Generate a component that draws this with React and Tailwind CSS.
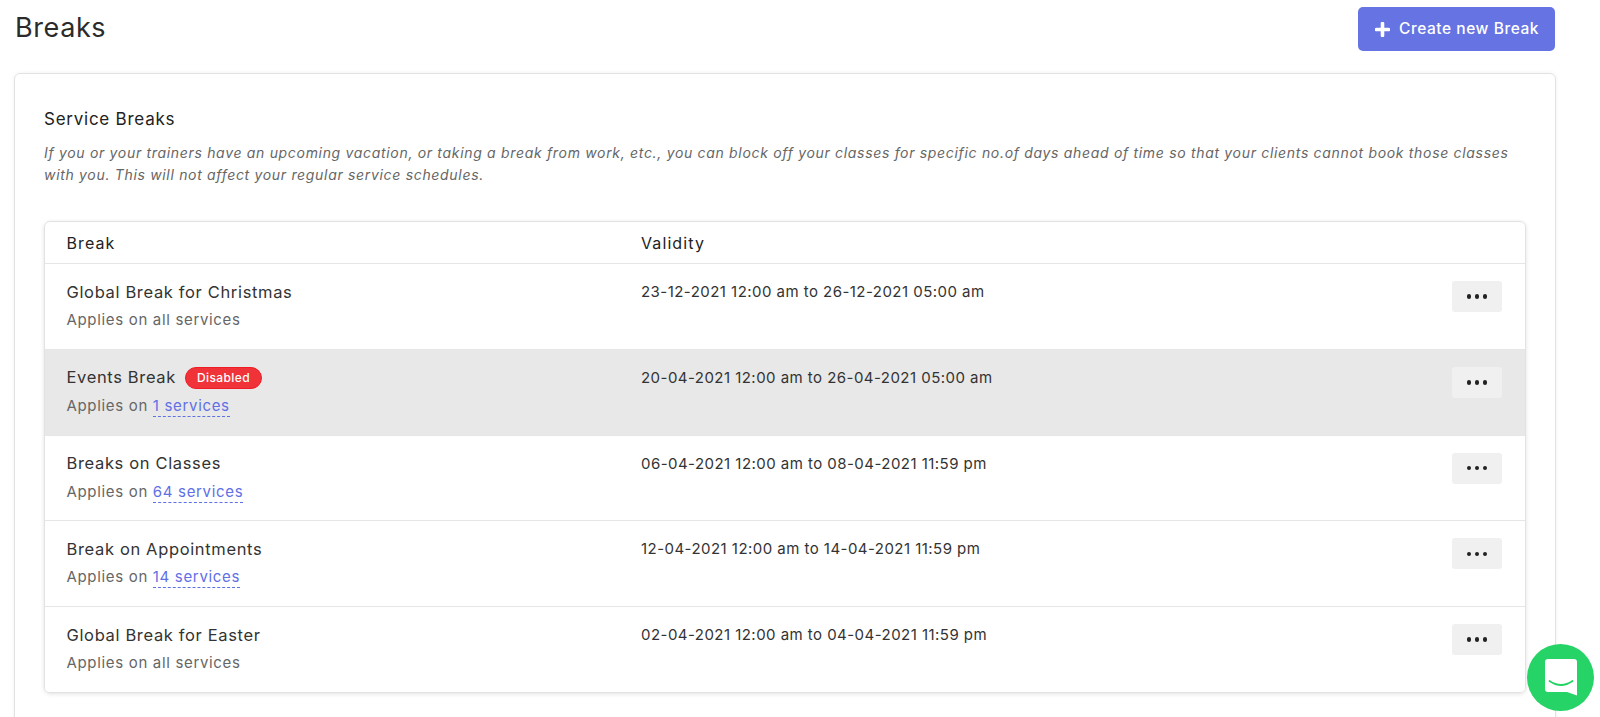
import React from "react";

const breaks = [
    { id: 1, name: "Global Break for Christmas", validity: "23-12-2021 12:00 am to 26-12-2021 05:00 am" },
    { id: 2, name: "Events Break", validity: "20-04-2021 12:00 am to 26-04-2021 05:00 am", count: 1, disabled: true },
    { id: 3, name: "Breaks on Classes", validity: "06-04-2021 12:00 am to 08-04-2021 11:59 pm", count: 64 },
    { id: 4, name: "Break on Appointments", validity: "12-04-2021 12:00 am to 14-04-2021 11:59 pm", count: 14 },
    { id: 5, name: "Global Break for Easter", validity: "02-04-2021 12:00 am to 04-04-2021 11:59 pm" },
];

const BreakRow = ({ item }) => (
    <div className={`flex h-[85.8px] border-t border-[#e6e6e6] ${item.disabled ? "bg-[#e8e8e8]" : "bg-white"}`}>
        <div className="w-[596px] pl-[21.5px] pt-[16px]">
            <div className="flex items-center h-[24px] text-[16.5px] tracking-[0.65px] text-[#333]">
                {item.name}
                {item.disabled && (
                    <span className="ml-[9px] h-[22px] w-[77px] flex items-center justify-center rounded-full border border-[#f01c24] bg-[#ef3338] text-white text-[12px] tracking-[0.4px] font-medium">
                        Disabled
                    </span>
                )}
            </div>
            <div className="mt-[5px] text-[15px] tracking-[0.67px] text-[#666]">
                Applies on{" "}
                {item.count ? (
                    <span className="text-[#5f6fe6] border-b border-dashed border-[#5f6fe6] pb-[1px]">{item.count} services</span>
                ) : (
                    "all services"
                )}
            </div>
        </div>
        <div className="flex-1 pt-[17px] text-[15px] tracking-[0.46px] leading-[22px] text-[#333]">{item.validity}</div>
        <div className="pt-[17px] pr-[23px]">
            <button className="w-[50px] h-[31px] flex items-center justify-center gap-[3.5px] rounded-[3px] bg-[#f0f0f0]">
                <span className="w-[4.5px] h-[4.5px] rounded-full bg-[#222]"></span>
                <span className="w-[4.5px] h-[4.5px] rounded-full bg-[#222]"></span>
                <span className="w-[4.5px] h-[4.5px] rounded-full bg-[#222]"></span>
            </button>
        </div>
    </div>
);

const App = () => {
    return (
        <div className="relative h-[717px] overflow-hidden bg-white font-['Inter','Liberation_Sans',sans-serif]">
            <div className="flex justify-between items-start pl-[15px] pr-[45px] pt-[7px]">
                <h1 className="mt-[3px] text-[27px] tracking-[0.6px] leading-[36px] text-[#2b2b2b]">Breaks</h1>
                <button className="flex items-center w-[197px] h-[44px] pl-[17px] rounded-[5px] bg-[#6573e3] text-white text-[15.5px] tracking-[0.55px] font-medium">
                    <svg width="15" height="15" viewBox="0 0 15 15" className="mr-[9px]">
                        <path d="M7.5 1.5v12M1.5 7.5h12" stroke="#fff" strokeWidth="3.6" strokeLinecap="round" />
                    </svg>
                    Create new Break
                </button>
            </div>

            <div className="ml-[14px] mr-[44px] mt-[22px] h-[700px] px-[29px] pt-[33px] rounded-[6px] border border-[#e2e2e2] shadow-[0_0_4px_rgba(0,0,0,0.06)]">
                <h2 className="text-[17px] tracking-[0.75px] leading-[24px] text-[#222]">Service Breaks</h2>
                <p className="mt-[11px] text-[14px] tracking-[0.68px] leading-[22px] italic text-[#666] whitespace-nowrap">
                    If you or your trainers have an upcoming vacation, or taking a break from work, etc., you can block off your classes for specific no.of days ahead of time so that your clients cannot book those classes
                    <br />
                    with you. This will not affect your regular service schedules.
                </p>

                <div className="mt-[35px] rounded-[6px] border border-[#e2e2e2] shadow-[0_1px_4px_rgba(0,0,0,0.12)] overflow-hidden">
                    <div className="flex items-center h-[41px] text-[16px] tracking-[1.1px] text-[#222]">
                        <div className="w-[596px] pl-[21.5px]">Break</div>
                        <div>Validity</div>
                    </div>
                    {breaks.map((b) => (
                        <BreakRow key={b.id} item={b} />
                    ))}
                </div>
            </div>

            <div className="absolute left-[1527px] top-[644px] w-[67px] h-[67px] rounded-full bg-[#25d366] flex items-center justify-center">
                <svg width="32" height="37" viewBox="0 0 32 37">
                    <path d="M3 0h26a3 3 0 0 1 3 3v33.5l-10-3.5H3a3 3 0 0 1-3-3V3a3 3 0 0 1 3-3z" fill="#fff" />
                    <path d="M4.5 22q11.5 8 23 0" fill="none" stroke="#25d366" strokeWidth="1.8" strokeLinecap="round" />
                </svg>
            </div>
        </div>
    );
};

export default App;
